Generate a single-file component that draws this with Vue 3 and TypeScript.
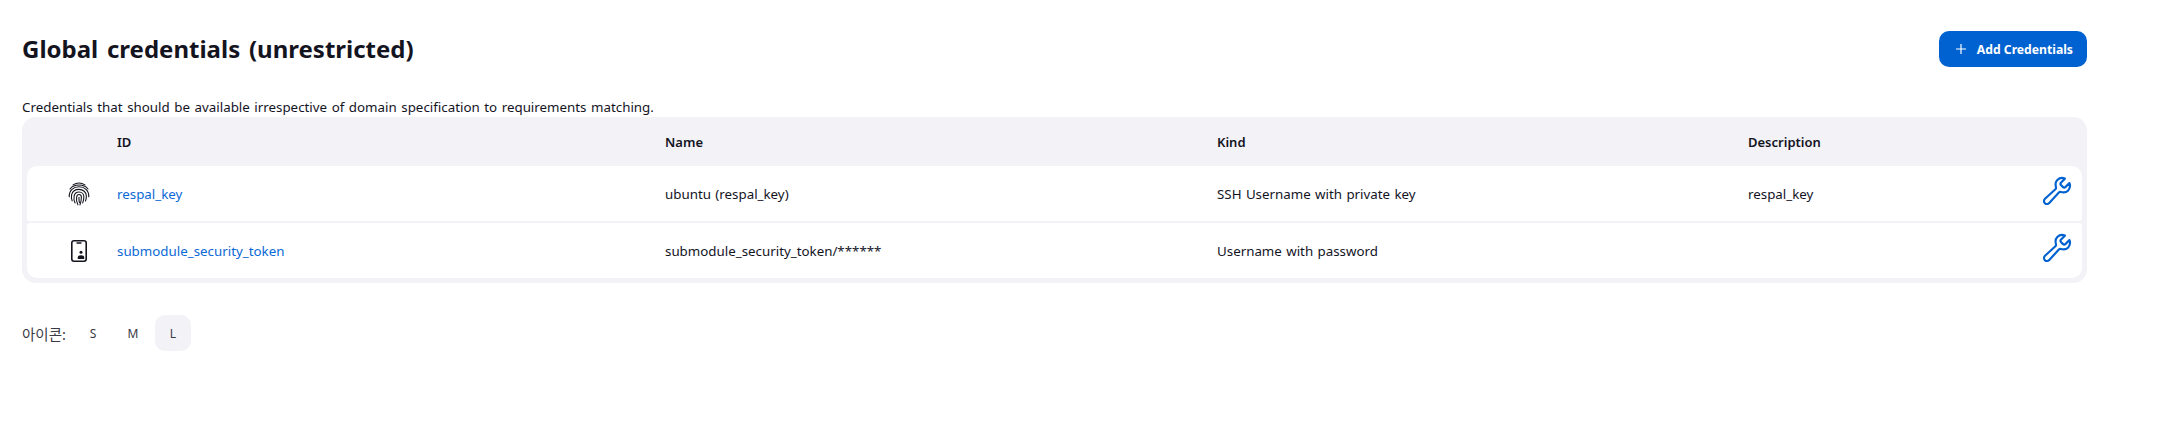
<script setup lang="ts">
interface Credential {
  id: string
  name: string
  kind: string
  description: string
  icon: 'finger' | 'phone'
}
const rows: Credential[] = [
  { id: 'respal_key', name: 'ubuntu (respal_key)', kind: 'SSH Username with private key', description: 'respal_key', icon: 'finger' },
  { id: 'submodule_security_token', name: 'submodule_security_token/******', kind: 'Username with password', description: '', icon: 'phone' },
]
const sizes = ['S', 'M', 'L']
const wrench = 'M393.87 190a32.1 32.1 0 01-45.25 0l-26.57-26.57a32.09 32.09 0 010-45.26L382.19 58a1 1 0 00-.3-1.62c-38.82-16.63-89.12-8.15-121.09 23.57-30.59 30.35-32.32 76-21.12 115.84a31.93 31.93 0 01-9.06 32.08L64 380a48.17 48.17 0 1068 68l153.86-167a31.93 31.93 0 0131.6-9.13c39.54 10.59 84.54 8.6 114.72-21.19 32.49-32 39.5-88.56 23.75-120.93a1 1 0 00-1.6-.26z'
</script>

<template>
  <main class="page">
    <header class="top">
      <h1>Global credentials (unrestricted)</h1>
      <button class="add" type="button">
        <svg viewBox="0 0 12 12" width="12" height="12"><path d="M6 1v10M1 6h10" fill="none" stroke="currentColor" stroke-width="1.2" /></svg>
        <span>Add Credentials</span>
      </button>
    </header>
    <p class="lead">Credentials that should be available irrespective of domain specification to requirements matching.</p>
    <section class="table">
      <div class="row head">
        <span></span><span>ID</span><span>Name</span><span>Kind</span><span>Description</span><span></span>
      </div>
      <div v-for="r in rows" :key="r.id" class="row body">
        <span class="kind-icon">
          <svg v-if="r.icon === 'finger'" viewBox="0 0 24 24" width="26" height="26" fill="none" stroke="#14141f" stroke-width="1" stroke-linecap="round">
            <path d="M6.500 3.600C9.800 1.500 14.200 1.500 17.500 3.600" />
            <path d="M3.700 7.400C7.500 2.500 16.500 2.500 20.300 7.400" />
            <path d="M3 14.500C2.700 8.500 7 5.300 12 5.300S21.300 8.500 21 14.500" />
            <path d="M5.700 18.300C4.900 16 5 13.500 5.200 12.600C6 9.400 8.800 7.700 12 7.700C15.800 7.700 18.800 10.300 18.800 13.800C18.800 15.500 18.600 17 18 18.500" />
            <path d="M8.400 20.300C7.400 18.500 7.200 15.500 7.500 13.800C8 11.400 9.800 10.100 12 10.100C14.600 10.100 16.500 12 16.500 14.500C16.500 16.500 16.100 18.300 15.400 20.200" />
            <path d="M11 22C9.800 20 9.500 17 9.800 15C10 13.400 10.900 12.500 12 12.500C13.300 12.500 14.200 13.500 14.200 15C14.200 17.500 13.700 20 12.900 22" />
            <path d="M12 15C11.900 17 12 18.500 12.400 20" />
          </svg>
          <svg v-else viewBox="0 0 24 24" width="24" height="24" fill="none" stroke="#14141f">
            <rect x="4.800" y="1.800" width="14.400" height="20.400" rx="2.200" stroke-width="1.600" />
            <path d="M10 4h4" stroke-width="1.300" stroke-linecap="round" />
            <circle cx="14" cy="13.200" r="1.500" fill="#14141f" stroke="none" />
            <path d="M10.800 20v-1.700c0-1.200 1-2.100 3.200-2.100s3.200.9 3.200 2.100V20z" fill="#14141f" stroke="none" />
          </svg>
        </span>
        <a class="link">{{ r.id }}</a>
        <span>{{ r.name }}</span>
        <span>{{ r.kind }}</span>
        <span>{{ r.description }}</span>
        <span class="action">
          <svg viewBox="0 0 512 512" width="32" height="32" fill="none" stroke="#0062d1" stroke-width="34" stroke-linecap="round" stroke-miterlimit="10">
            <path :d="wrench" />
          </svg>
        </span>
      </div>
    </section>
    <div class="sizes">
      <span class="sizes-label">아이콘:</span>
      <span v-for="s in sizes" :key="s" class="size" :class="{ active: s === 'L' }">{{ s }}</span>
    </div>
  </main>
</template>

<style>
html, body { margin: 0; background: #fff; }
</style>

<style scoped>
.page {
  width: 2065px;
  padding: 31px 0 0 22px;
  font-family: "Noto Sans", "Noto Sans CJK KR", sans-serif;
  color: #14141f;
  font-size: 13.33px;
  word-spacing: 0.9px;
}
.top {
  display: flex;
  justify-content: space-between;
  align-items: center;
  height: 36px;
}
h1 {
  margin: 0;
  font-size: 24px;
  font-weight: 700;
  line-height: 36px;
  word-spacing: 2.5px;
}
.add {
  display: flex;
  align-items: center;
  gap: 10px;
  height: 36px;
  box-sizing: border-box;
  padding: 0 14px 0 16px;
  border: 0;
  border-radius: 10px;
  background: #0062d1;
  color: #fff;
  font: 700 12.2px "Noto Sans", sans-serif;
}
.lead {
  margin: 30px 0 0;
  line-height: 20px;
  word-spacing: 1.1px;
}
.table {
  box-sizing: border-box;
  height: 166px;
  padding: 0 5px 5px;
  border-radius: 14px;
  background: #f2f2f7;
  display: flex;
  flex-direction: column;
  gap: 2px;
}
.row {
  display: grid;
  grid-template-columns: 90px 548px 552px 531px 1fr 60px;
  align-items: center;
}
.head {
  height: 49px;
  margin-bottom: -2px;
  font-size: 13px;
  font-weight: 600;
}
.body {
  height: 55px;
  background: #fff;
}
.body:nth-child(2) { border-radius: 10px 10px 3px 3px; }
.body:nth-child(3) { border-radius: 3px 3px 10px 10px; }
.kind-icon {
  display: flex;
  justify-content: center;
  padding-left: 14px;
  box-sizing: border-box;
}
.kind-icon svg { display: block; }
.link { color: #0b69d6; }
.action {
  display: flex;
  justify-content: flex-end;
  padding-right: 9px;
}
.action svg { display: block; margin-top: -5px; }
.sizes {
  display: flex;
  align-items: center;
  margin-top: 32px;
  height: 36px;
}
.sizes-label {
  width: 53px;
  font-size: 14.5px;
  color: #3a3a45;
}
.size {
  width: 36px;
  height: 36px;
  margin-right: 4px;
  border-radius: 10px;
  display: flex;
  align-items: center;
  justify-content: center;
  font-size: 12px;
  color: #3a3a45;
}
.size.active { background: #f2f2f7; }
</style>
